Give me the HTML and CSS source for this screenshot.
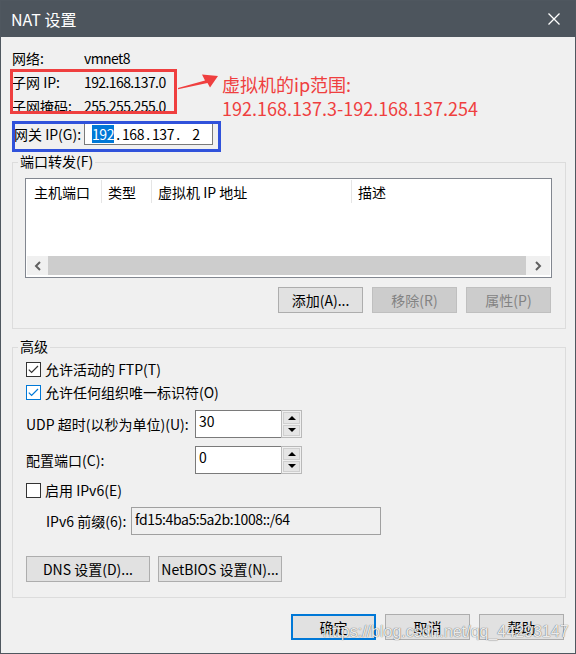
FILE: index.html
```html
<!DOCTYPE html>
<html lang="zh-CN">
<head>
<meta charset="utf-8">
<title>NAT 设置</title>
<link rel="stylesheet" href="styles.css">
</head>
<body>
<div class="window">
  <div class="titlebar">
    <span class="title">NAT 设置</span>
    <svg class="close" width="12" height="12" viewBox="0 0 12 12"><path d="M0.5 0.5 L11.5 11.5 M11.5 0.5 L0.5 11.5" stroke="#fff" stroke-width="1.3" fill="none"/></svg>
  </div>
  <div class="content">
    <div class="info">
      <div class="row"><span class="lbl">网络:</span><span class="lat">vmnet8</span></div>
      <div class="row"><span class="lbl">子网 IP:</span><span class="lat">192.168.137.0</span></div>
      <div class="row"><span class="lbl">子网掩码:</span><span class="lat">255.255.255.0</span></div>
    </div>
    <div class="row gw">
      <span class="lbl gwl">网关 IP(G):</span>
      <div class="ipbox">
        <span class="ipf"><span class="sel">192</span></span><span class="dot">.</span><span class="ipf">168</span><span class="dot">.</span><span class="ipf">137</span><span class="dot">.</span><span class="ipf last">2</span>
      </div>
    </div>

    <div class="group g1">
      <span class="legend">端口转发(F)</span>
      <div class="list">
        <div class="lh">
          <div class="c c1">主机端口</div>
          <div class="c c2">类型</div>
          <div class="c c3">虚拟机 IP 地址</div>
          <div class="c c4">描述</div>
        </div>
        <div class="lb"></div>
        <div class="hs">
          <div class="sbb sbl"><svg width="8" height="10" viewBox="0 0 8 10"><path d="M6 1 L2 5 L6 9" stroke="#606060" stroke-width="2" fill="none"/></svg></div>
          <div class="thumb"></div>
          <div class="sbb sbr"><svg width="8" height="10" viewBox="0 0 8 10"><path d="M2 1 L6 5 L2 9" stroke="#606060" stroke-width="2" fill="none"/></svg></div>
        </div>
      </div>
      <div class="btns">
        <div class="btn">添加(A)...</div>
        <div class="btn dis">移除(R)</div>
        <div class="btn dis">属性(P)</div>
      </div>
    </div>

    <div class="group g2">
      <span class="legend">高级</span>
      <div class="cbrow r1">
        <span class="cb"><svg width="13" height="13" viewBox="0 0 13 13"><path d="M1.8 6.6 L4.6 9.4 L11 3" stroke="#333" stroke-width="1.2" fill="none"/></svg></span>
        <span>允许活动的 FTP(T)</span>
      </div>
      <div class="cbrow r2">
        <span class="cb blue"><svg width="13" height="13" viewBox="0 0 13 13"><path d="M1.8 6.6 L4.6 9.4 L11 3" stroke="#0078d7" stroke-width="1.2" fill="none"/></svg></span>
        <span>允许任何组织唯一标识符(O)</span>
      </div>
      <div class="spinrow s1">
        <span class="slbl">UDP 超时(以秒为单位)(U):</span>
        <div class="spin">
          <div class="field">30</div>
          <div class="sbtns">
            <div class="sb"><span class="tri up"></span></div>
            <div class="sb"><span class="tri down"></span></div>
          </div>
        </div>
      </div>
      <div class="spinrow s2">
        <span class="slbl">配置端口(C):</span>
        <div class="spin">
          <div class="field">0</div>
          <div class="sbtns">
            <div class="sb"><span class="tri up"></span></div>
            <div class="sb"><span class="tri down"></span></div>
          </div>
        </div>
      </div>
      <div class="cbrow r3">
        <span class="cb"></span>
        <span>启用 IPv6(E)</span>
      </div>
      <div class="v6row">
        <span class="v6lbl">IPv6 前缀(6):</span>
        <div class="v6in"><span class="lat2">fd15:4ba5:5a2b:1008::/64</span></div>
      </div>
      <div class="gbtns">
        <div class="btn wide">DNS 设置(D)...</div>
        <div class="btn wide">NetBIOS 设置(N)...</div>
      </div>
    </div>

    <div class="footer">
      <div class="btn def">确定</div>
      <div class="btn">取消</div>
      <div class="btn">帮助</div>
    </div>
  </div>

  <div class="redbox"></div>
  <svg class="arrow" width="55" height="30" viewBox="0 0 55 30"><polygon points="7,22 34,14.5 31,8.5 47,10 39,21.5 36.5,17 7,23.2" fill="#ef3f3f"/></svg>
  <div class="note">
    <div>虚拟机的ip范围:</div>
    <div>192.168.137.3-192.168.137.254</div>
  </div>
  <div class="bluebox"></div>
  <div class="watermark">https://blog.csdn.net/qq_44293147</div>
</div>
</body>
</html>
```

FILE: styles.css
```css
* { box-sizing: border-box; }
body { margin: 0; background: #ffffff; }

.window {
  position: relative;
  width: 576px;
  height: 654px;
  border: 1px solid #4f575f;
  background: #f0f0f0;
  font-family: "Noto Sans CJK SC", "Microsoft YaHei", sans-serif;
  font-size: 14px;
  line-height: 20px;
  color: #000;
  overflow: hidden;
}

.titlebar {
  height: 36px;
  background: #4d555d;
  display: flex;
  align-items: center;
  justify-content: space-between;
  padding: 0 15px 0 10px;
  color: #fff;
}
.title { font-size: 16px; }
.close { display: block; }

.content { padding: 9px 9px 0 11px; }

.row { height: 24px; display: flex; align-items: center; }
.lbl { width: 72px; flex: none; }
.lat { letter-spacing: -0.6px; }
.lat2 { letter-spacing: -0.4px; }
.gw { margin-top: 4px; padding-left: 2px; }
.gwl { width: 70px; }

.ipbox {
  width: 129px;
  height: 22px;
  border: 1px solid #7a7a7a;
  background: #fff;
  display: flex;
  align-items: center;
  padding-left: 5px;
  letter-spacing: -0.4px;
}
.ipf { width: 26px; text-align: center; line-height: 18px; }
.ipf.last { padding-left: 6px; }
.dot { width: 4px; text-align: center; }
.sel { display: inline-block; background: #0078d7; color: #fff; line-height: 18px; }

.group { position: relative; border: 1px solid #dcdcdc; }
.legend {
  position: absolute;
  left: 5px;
  top: -12px;
  padding: 0 2px;
  background: #f0f0f0;
  line-height: 20px;
}
.g1 { margin-top: 16px; padding: 15px 13px 15px 12px; }
.g2 { margin-top: 18px; padding: 9px 13px 15px 13px; }

.list {
  height: 100px;
  border: 1px solid #828790;
  background: #fff;
  display: flex;
  flex-direction: column;
}
.lh { height: 25px; display: flex; flex: none; }
.c {
  height: 23px;
  margin-top: 1px;
  display: flex;
  align-items: center;
  border-right: 1px solid #e5e5e5;
  padding-left: 6px;
}
.c1 { width: 76px; padding-left: 8px; }
.c2 { width: 50px; }
.c3 { width: 200px; }
.c4 { flex: 1; border-right: none; }
.lb { flex: 1; }
.hs { height: 19px; margin: 0 1px 2px 1px; display: flex; flex: none; }
.sbb { background: #f0f0f0; display: flex; align-items: center; justify-content: center; }
.sbl { width: 21px; }
.sbr { width: 24px; }
.thumb { flex: 1; background: #cdcdcd; }

.btns { display: flex; justify-content: flex-end; gap: 9px; margin-top: 9px; margin-right: 1px; }
.btn {
  width: 85px;
  height: 26px;
  border: 1px solid #adadad;
  background: #e1e1e1;
  display: flex;
  align-items: center;
  justify-content: center;
  white-space: nowrap;
}
.btn.dis { background: #cccccc; border-color: #bfbfbf; color: #838383; }
.btn.wide { width: 124px; }
.btn.def { border: 2px solid #0078d7; }

.cbrow { display: flex; align-items: center; }
.r1 { height: 24px; }
.r2 { height: 22px; }
.r3 { height: 24px; margin-top: 4px; }
.cb {
  width: 15px;
  height: 15px;
  flex: none;
  border: 1px solid #333;
  background: #fff;
  margin-right: 4px;
  display: flex;
}
.cb.blue { border-color: #0078d7; }
.cb svg { display: block; }

.spinrow { display: flex; align-items: center; height: 28px; }
.s1 { margin-top: 7px; }
.s2 { margin-top: 8px; }
.slbl { width: 169px; flex: none; white-space: nowrap; }
.spin { display: flex; height: 28px; }
.field {
  width: 86px;
  border: 1px solid #7a7a7a;
  border-right: none;
  background: #fff;
  padding: 0 3px;
  line-height: 20px;
}
.sbtns {
  width: 21px;
  border: 1px solid #b9b9b9;
  background: #f0f0f0;
  display: flex;
  flex-direction: column;
  padding: 1px;
  gap: 1px;
}
.sb {
  flex: 1;
  background: #e5e5e5;
  border: 1px solid #cfcfcf;
  display: flex;
  align-items: center;
  justify-content: center;
}
.tri { width: 0; height: 0; border-left: 4px solid transparent; border-right: 4px solid transparent; }
.tri.up { border-bottom: 4px solid #000; }
.tri.down { border-top: 4px solid #000; }

.v6row { display: flex; align-items: center; height: 28px; margin-top: 5px; padding-left: 20px; }
.v6lbl { width: 85px; flex: none; white-space: nowrap; }
.v6in {
  width: 250px;
  height: 28px;
  border: 1px solid #a0a0a0;
  background: #f0f0f0;
  padding: 0 3px;
  line-height: 22px;
}

.gbtns { display: flex; gap: 8px; margin-top: 21px; }

.footer { display: flex; justify-content: flex-end; gap: 9px; margin-top: 16px; padding-right: 2px; }

/* annotations drawn over the dialog */
.redbox { position: absolute; left: 9px; top: 68px; width: 167px; height: 45px; border: 3px solid #ef3f3f; }
.arrow { position: absolute; left: 170px; top: 65px; }
.note { position: absolute; left: 221px; top: 71px; color: #ef3f3f; font-size: 18px; line-height: 24px; white-space: nowrap; }
.bluebox { position: absolute; left: 11px; top: 120px; width: 209px; height: 31px; border: 3px solid #3052db; }
.watermark {
  position: absolute;
  left: 322px;
  top: 621px;
  font-family: "Liberation Sans", sans-serif;
  font-size: 16px;
  line-height: 20px;
  color: rgba(255, 255, 255, 0.9);
  text-shadow: 0 0 1px rgba(0, 0, 0, 0.55), 0 0 1px rgba(0, 0, 0, 0.3);
  white-space: nowrap;
}
```
